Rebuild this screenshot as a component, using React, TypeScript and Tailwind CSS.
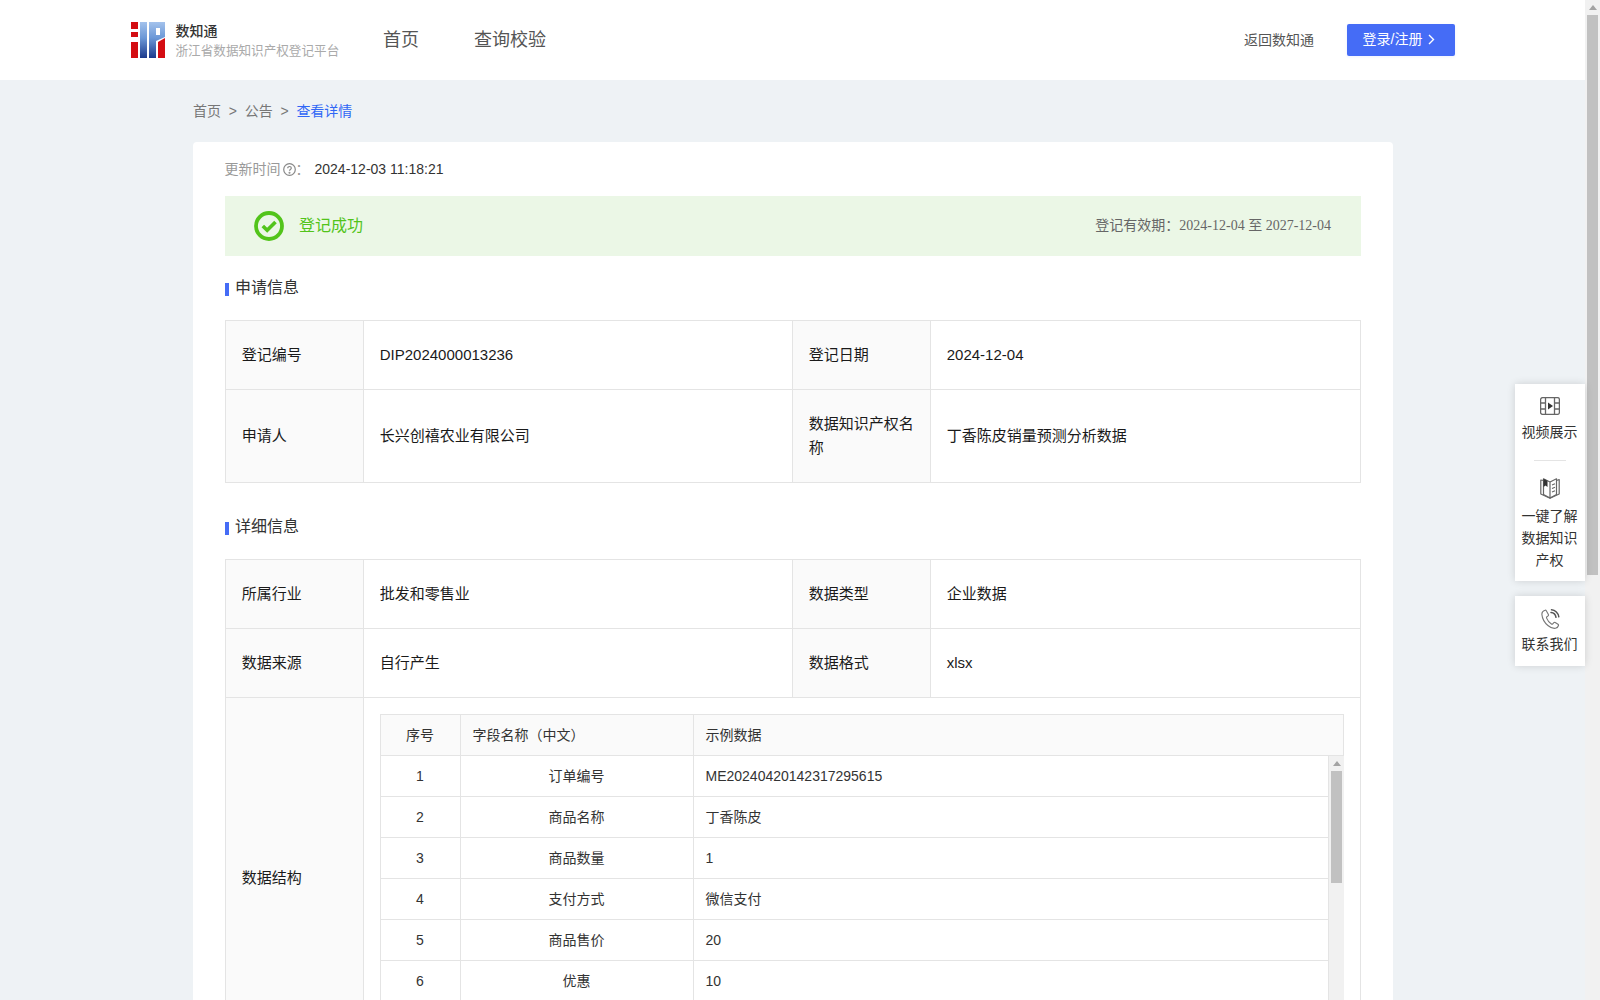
import React from "react";

const Logo = () => (
  <svg width="34" height="36" viewBox="0 0 34 36" className="shrink-0">
    <defs>
      <linearGradient id="blue" x1="0" y1="0" x2="0" y2="1">
        <stop offset="0" stopColor="#a3c2ec" />
        <stop offset="0.45" stopColor="#6b97d6" />
        <stop offset="1" stopColor="#1c3a8c" />
      </linearGradient>
    </defs>
    <rect x="0" y="0" width="7" height="7" fill="#d40d12" />
    <rect x="0" y="10" width="7" height="5" fill="#d40d12" />
    <rect x="0" y="20" width="7" height="16" fill="#d40d12" />
    <rect x="9" y="0" width="7" height="36" fill="url(#blue)" />
    <path d="M18 0H34V15L25 19V36H18Z" fill="url(#blue)" />
    <rect x="25" y="6" width="4" height="7" fill="#fff" />
    <path d="M27 20L34 16V36H27Z" fill="#d40d12" />
  </svg>
);

const FilmIcon = () => (
  <svg width="20" height="18" viewBox="0 0 20 18" fill="none" stroke="#666" strokeWidth="1.3">
    <rect x="0.6" y="0.6" width="18.8" height="16.8" rx="2" />
    <path d="M5.5 0.6V17.4M14.5 0.6V17.4M0.6 6H5.5M0.6 12H5.5M14.5 6H19.4M14.5 12H19.4" />
    <path d="M8 5.5L13 9L8 12.5Z" fill="#333" stroke="none" />
  </svg>
);

const BookIcon = () => (
  <svg width="20" height="21" viewBox="0 0 20 21" fill="none" stroke="#666" strokeWidth="1.2" strokeLinejoin="round">
    <path d="M3.5 2.5L0.8 2V16L10 20.2L19.2 16V1.5L16.5 2.5" />
    <path d="M3.5 0.8L10 4V20L3.5 16.5Z" />
    <path d="M10 4L16.5 0.8V16.5L10 20" />
    <path d="M3.5 0.8L7.5 2.8V9L5.5 7.6L3.5 9Z" fill="#333" stroke="none" />
    <path d="M12 7L15 5.8M12 10.5L15 9.3M12 14L15 12.8" />
  </svg>
);

const PhoneIcon = () => (
  <svg width="19" height="20" viewBox="0 0 19 20" fill="none" stroke="#777" strokeWidth="1.1" strokeLinecap="round" strokeLinejoin="round">
    <path d="M4 1.2C2 1.8.7 3.2.9 5.6c.4 4 2.6 8 6 10.9 2.600 2.200 5.500 3.200 7.600 2.800 1.300-.3 2.600-1.400 3-2.800.1-.5-.1-.9-.5-1.200l-2.800-1.800c-.5-.3-1-.2-1.400.2l-1 1.100c-.4.400-.9.500-1.400.2-2-1.200-3.900-3.700-4.800-5.900-.2-.5-.1-1 .3-1.300l1.200-1c.4-.3.5-.9.300-1.300L5.300 1.700C5 1.200 4.500 1 4 1.200Z" />
    <path d="M10 3.500c2.500.2 4.600 2.200 5 4.800" stroke="#555" strokeWidth="1.500" />
    <path d="M10.500.8c3.700.2 6.800 3.200 7.300 7" stroke="#555" strokeWidth="1.500" />
  </svg>
);

const Section = ({ title, className }: { title: string; className: string }) => (
  <div className={`flex items-center ${className}`}>
    <span className="w-1 h-[13px] bg-[#456cf6] mt-[2px]" />
    <span className="ml-[6px] text-base text-[#333]">{title}</span>
  </div>
);

const Label = ({ children, className = "" }: { children: React.ReactNode; className?: string }) => (
  <div className={`flex items-center pl-[15.75px] pr-4 bg-[#fafafa] border-r border-b border-[#e4e4e4] text-[15px] leading-6 text-[#1a1a1a] ${className}`}>
    {children}
  </div>
);
const Value = ({ children }: { children: React.ReactNode }) => (
  <div className="flex items-center pl-[15.75px] pr-4 border-r border-b border-[#e4e4e4] text-[15px] leading-6 text-[#1a1a1a]">{children}</div>
);

const rows = [
  ["1", "订单编号", "ME20240420142317295615"],
  ["2", "商品名称", "丁香陈皮"],
  ["3", "商品数量", "1"],
  ["4", "支付方式", "微信支付"],
  ["5", "商品售价", "20"],
  ["6", "优惠", "10"],
];

const Row = ({ r }: { r: string[] }) => (
  <div className="grid grid-cols-[80px_233px_635px] h-[41px] text-sm text-[#333]">
    <div className="flex items-center justify-center pr-[1px] border-r border-b border-[#e4e4e4]">{r[0]}</div>
    <div className="flex items-center justify-center pr-[1px] border-r border-b border-[#e4e4e4]">{r[1]}</div>
    <div className="flex items-center pl-[11.5px] border-r border-b border-[#e4e4e4]">{r[2]}</div>
  </div>
);

export default function App() {
  return (
    <div
      className="relative flex h-screen overflow-hidden bg-[#eef2f5]"
      style={{ fontFamily: '"Liberation Sans", "Noto Sans CJK SC", sans-serif' }}
    >
      <div className="w-[1585px] shrink-0">
        <header className="flex items-center h-20 bg-white pl-[131px] pr-[130px]">
          <Logo />
          <div className="ml-[10.5px] w-[207.5px] shrink-0 pb-[1px]">
            <div className="text-sm leading-5 font-medium text-[#333]">数知通</div>
            <div className="text-[12.6px] leading-4 mt-[2px] text-[#aaa]">浙江省数据知识产权登记平台</div>
          </div>
          <nav className="flex gap-[55px] text-lg text-[#555]">
            <span>首页</span>
            <span>查询校验</span>
          </nav>
          <div className="flex-1" />
          <span className="text-sm text-[#555] mr-[1px]">返回数知通</span>
          <button className="ml-[32px] flex items-center justify-center gap-[6px] w-[108px] h-8 pr-[4px] pb-[2px] rounded-[2px] bg-[#456cf6] text-sm text-white shadow-[0_1px_3px_rgba(69,108,246,0.1)]">
            登录/注册
            <svg width="7" height="11" viewBox="0 0 7 11" fill="none" stroke="#fff" strokeWidth="1.4"><path d="M1 1L5.500 5.500L1 10" /></svg>
          </button>
        </header>

        <div className="ml-[193px] w-[1200px]">
          <div className="flex items-center h-[62px] text-sm text-[#777]">
            <span>首页</span>
            <span className="mx-[7.75px]">&gt;</span>
            <span>公告</span>
            <span className="mx-[7.75px]">&gt;</span>
            <span className="text-[#3067f5]">查看详情</span>
          </div>

          <div className="bg-white rounded-[4px] px-8">
            <div className="flex items-center h-[54px] text-sm">
              <span className="text-[#999] -ml-[0.5px]">更新时间</span>
              <svg width="13" height="13" viewBox="0 0 13 13" fill="none" stroke="#888" strokeWidth="1.2" className="ml-[2px]">
                <circle cx="6.500" cy="6.500" r="5.800" />
                <path d="M4.700 5.200c0-1 .8-1.700 1.800-1.700s1.800.7 1.800 1.600c0 1.300-1.800 1.300-1.800 2.600" />
                <circle cx="6.500" cy="9.800" r="0.400" />
              </svg>
              <span className="text-[#999]">：</span>
              <span className="ml-[5px] text-[#333]">2024-12-03 11:18:21</span>
            </div>

            <div className="flex items-center justify-between h-[60px] pl-[29px] pr-[30px] bg-[#ebf7e6]">
              <div className="flex items-center gap-[15px]">
                <svg width="30" height="30" viewBox="0 0 30 30" fill="none" stroke="#52c41a">
                  <circle cx="15" cy="15" r="13" strokeWidth="3.800" />
                  <path d="M8.800 15L13.200 19.300L21.500 11" strokeWidth="3.600" />
                </svg>
                <span className="text-base text-[#52c41a]">登记成功</span>
              </div>
              <span
                className="text-sm text-[#666]"
                style={{ fontFamily: '"Liberation Serif", "Noto Sans CJK SC", serif' }}
              >
                登记有效期：2024-12-04 至 2027-12-04
              </span>
            </div>

            <Section title="申请信息" className="h-[64px]" />

            <div className="border-t border-l border-[#e4e4e4] grid grid-cols-[138px_429px_138px_430px] grid-rows-[69px_93px]">
              <Label>登记编号</Label>
              <Value>DIP2024000013236</Value>
              <Label>登记日期</Label>
              <Value>2024-12-04</Value>
              <Label>申请人</Label>
              <Value>长兴创禧农业有限公司</Value>
              <Label>数据知识产权名称</Label>
              <Value>丁香陈皮销量预测分析数据</Value>
            </div>

            <Section title="详细信息" className="h-[64px] mt-[12px]" />

            <div className="border-t border-l border-[#e4e4e4] grid grid-cols-[138px_429px_138px_430px] grid-rows-[69px_69px_360px]">
              <Label>所属行业</Label>
              <Value>批发和零售业</Value>
              <Label>数据类型</Label>
              <Value>企业数据</Value>
              <Label>数据来源</Label>
              <Value>自行产生</Value>
              <Label>数据格式</Label>
              <Value>xlsx</Value>
              <Label>数据结构</Label>
              <div className="col-span-3 p-4 border-r border-b border-[#e4e4e4]">
                <div className="border-t border-l border-[#e4e4e4] h-[328px] overflow-hidden">
                  <div className="grid grid-cols-[80px_233px_650px] h-[41px] bg-[#fafafa] text-sm text-[#333]">
                    <div className="flex items-center justify-center pr-[1px] border-r border-b border-[#e4e4e4]">序号</div>
                    <div className="flex items-center pl-[11.5px] border-r border-b border-[#e4e4e4]">字段名称（中文）</div>
                    <div className="flex items-center pl-[11.5px] border-r border-b border-[#e4e4e4]">示例数据</div>
                  </div>
                  <div className="flex border-r border-[#e4e4e4] w-[964px]">
                    <div className="w-[948px]">
                      {rows.map((r) => (
                        <Row key={r[0]} r={r} />
                      ))}
                    </div>
                    <div className="w-[15px] h-[287px] bg-[#f1f1f1] flex flex-col items-center pt-[5px]">
                      <div className="w-0 h-0 border-x-[4px] border-b-[5px] border-x-transparent border-b-[#a3a3a3]" />
                      <div className="w-[11px] h-[112px] mt-[5px] bg-[#c1c1c1]" />
                    </div>
                  </div>
                </div>
              </div>
            </div>
          </div>
        </div>
      </div>

      <div className="w-[15px] shrink-0 bg-[#f1f1f1] flex flex-col items-center pt-[5px]">
        <div className="w-0 h-0 border-x-[4px] border-b-[5px] border-x-transparent border-b-[#a3a3a3]" />
        <div className="w-[11px] h-[560px] mt-[5px] bg-[#c1c1c1]" />
      </div>

      <div className="absolute top-[384px] left-[1515px] w-[70px] text-sm leading-[22px] text-[#333] text-center">
        <div className="bg-white shadow-[0_0_8px_rgba(0,0,0,0.14)] h-[197px] pt-[13px] flex flex-col items-center">
          <FilmIcon />
          <div className="mt-[6px] pr-[1px]">视频展示</div>
          <div className="w-8 h-px bg-[#e4e4e4] mt-[17px]" />
          <div className="mt-[17px]"><BookIcon /></div>
          <div className="mt-[6px] pr-[1px]">一键了解<br />数据知识<br />产权</div>
        </div>
        <div className="bg-white shadow-[0_0_8px_rgba(0,0,0,0.14)] h-[70px] mt-[15px] pt-[13px] flex flex-col items-center">
          <PhoneIcon />
          <div className="mt-[4px] pr-[1px]">联系我们</div>
        </div>
      </div>
    </div>
  );
}
